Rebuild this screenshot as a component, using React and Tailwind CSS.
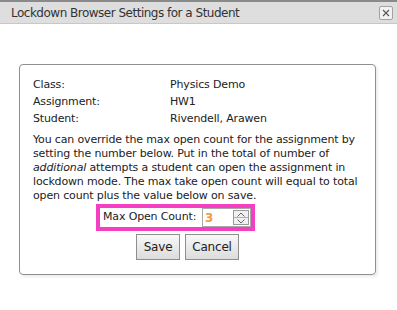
export default function App() {
  const font = { fontFamily: '"DejaVu Sans", Verdana, sans-serif' };
  return (
    <div className="w-[397px] h-[310px] bg-white overflow-hidden text-[#222]" style={font}>
      <div className="h-[2px] bg-[#8a8a8a]" />
      <div className="h-[22px] bg-[#dedede] border-b border-[#c8c8c8] flex items-center justify-between pl-[11px] pr-[4px]">
        <span className="text-[12px] tracking-[-0.5px] text-[#333] leading-none">Lockdown Browser Settings for a Student</span>
        <div className="w-[14px] h-[14px] border border-[#a2a2a2] rounded-[2px] bg-[#f2f2f2] flex items-center justify-center">
          <svg width="8" height="8" viewBox="0 0 8 8">
            <path d="M1 1L7 7M7 1L1 7" stroke="#555" strokeWidth="1.1" fill="none" />
          </svg>
        </div>
      </div>
      <div className="pt-[40px] pl-[19px]">
        <div className="w-[357px] h-[211px] border border-[#8f8f8f] rounded-[4px] shadow-[2px_2px_3px_rgba(0,0,0,0.08)] pt-[12px] pl-[13px] text-[11px] tracking-[-0.15px]">
          <div className="flex h-[17px] items-center"><span className="w-[137px]">Class:</span><span>Physics Demo</span></div>
          <div className="flex h-[17px] items-center"><span className="w-[137px]">Assignment:</span><span>HW1</span></div>
          <div className="flex h-[17px] items-center"><span className="w-[137px]">Student:</span><span>Rivendell, Arawen</span></div>
          <p className="mt-[5px] leading-[14px] whitespace-nowrap">
            You can override the max open count for the assignment by<br />
            setting the number below. Put in the total of number of<br />
            <i>additional</i> attempts a student can open the assignment in<br />
            lockdown mode. The max take open count will equal to total<br />
            open count plus the value below on save.
          </p>
          <div className="ml-[63px] mt-[1px] w-[159px] h-[27px] border-4 border-[#f53fc2] flex items-center justify-between pl-[3px]">
            <span className="whitespace-nowrap">Max Open Count:</span>
            <div className="w-[49px] h-[19px] shrink-0 border border-[#a9a9a9] flex items-center justify-between pl-[2px] pr-[1px]">
              <span className="text-[12px] font-bold text-[#f59a3c] leading-none">3</span>
              <div className="w-[16px] h-[15px] border border-[#9a9a9a] bg-[#f0f0f0] flex flex-col">
                <div className="flex-1 flex items-center justify-center border-b border-[#b0b0b0]">
                  <svg width="8" height="5" viewBox="0 0 8 5"><path d="M0.5 4.5L4 1L7.5 4.5" stroke="#666" fill="none" /></svg>
                </div>
                <div className="flex-1 flex items-center justify-center">
                  <svg width="8" height="5" viewBox="0 0 8 5"><path d="M0.5 0.5L4 4L7.5 0.5" stroke="#666" fill="none" /></svg>
                </div>
              </div>
            </div>
          </div>
          <div className="ml-[103px] mt-[3px] flex gap-[5px]">
            <button className="w-[44px] h-[26px] border border-[#8e8e8e] bg-gradient-to-b from-[#f8f8f8] to-[#dcdcdc] text-[12px] tracking-[-0.2px] text-[#222]">Save</button>
            <button className="w-[54px] h-[26px] border border-[#8e8e8e] bg-gradient-to-b from-[#f8f8f8] to-[#dcdcdc] text-[12px] tracking-[-0.2px] text-[#222]">Cancel</button>
          </div>
        </div>
      </div>
    </div>
  );
}
